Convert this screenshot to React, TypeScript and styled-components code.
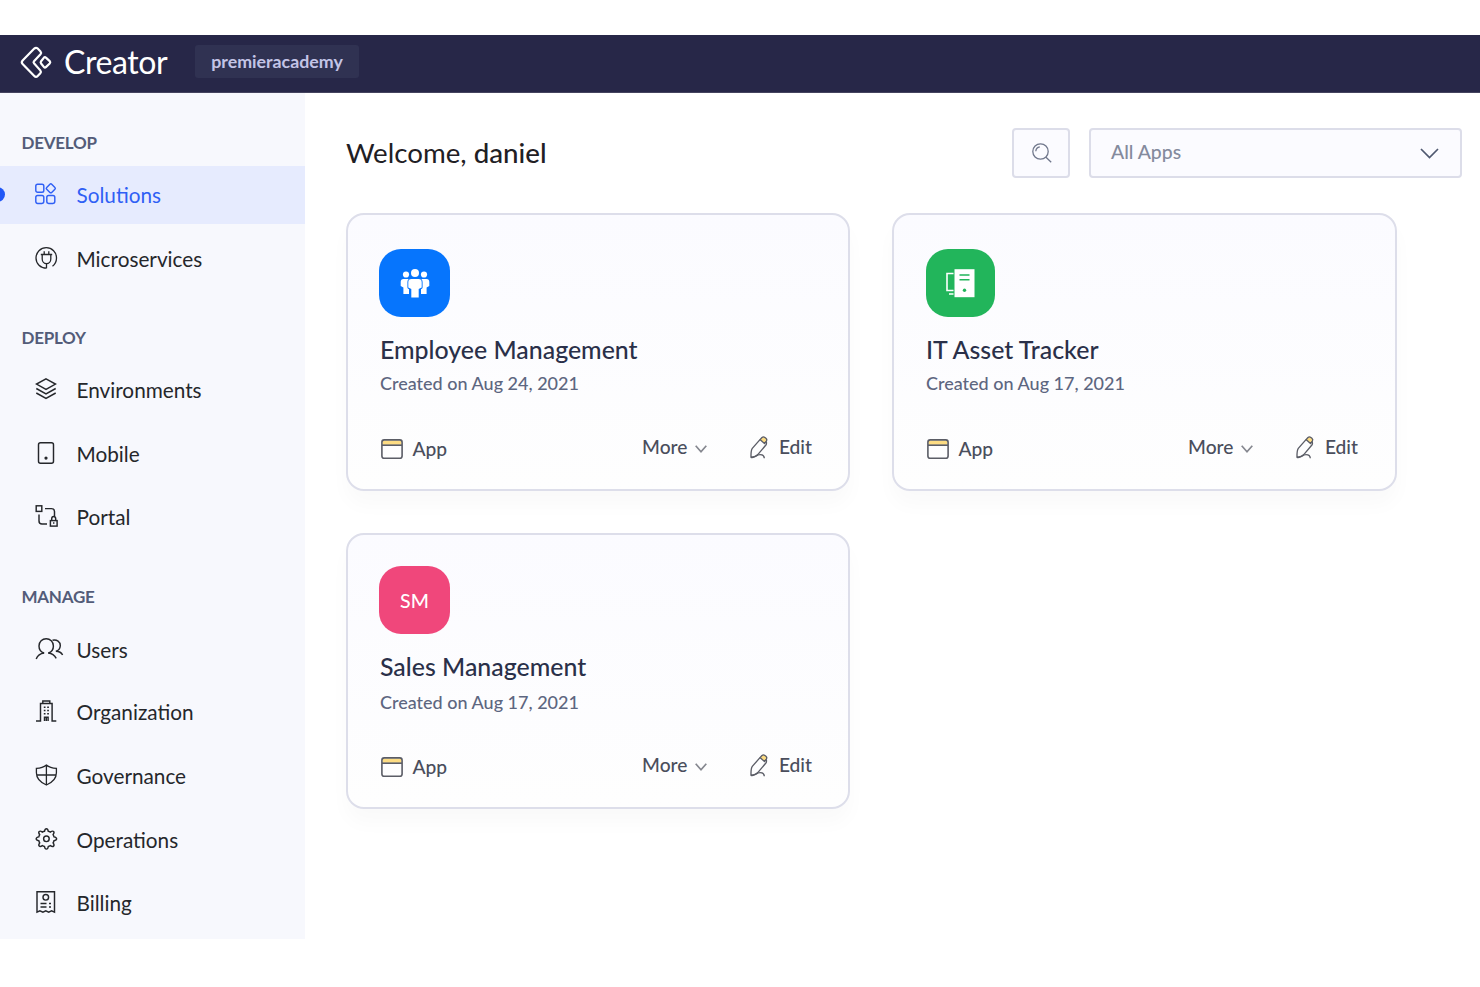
import React from 'react';
import styled, { createGlobalStyle } from 'styled-components';

const GlobalStyle = createGlobalStyle`
  * { box-sizing: border-box; }
  body { margin: 0; background: #fff; font-family: Lato, "Liberation Sans", sans-serif; color: #24262b; }
  svg { display: block; flex: none; overflow: visible; }
`;

const Page = styled.div`
  width: 1480px;
  height: 987px;
  padding-top: 35px;
  overflow: hidden;
`;

const TopBar = styled.header`
  height: 58px;
  background: #272748;
  border-bottom: 1px solid #45445f;
  display: flex;
  align-items: flex-start;
  padding: 10px 0 0 20px;
`;

const Brand = styled.div`
  width: 175px;
  display: flex;
  gap: 12px;
  color: #fff;
  font-size: 32px;
  line-height: 34px;
  letter-spacing: -0.4px;
  white-space: nowrap;
`;

const Workspace = styled.div`
  width: 164px;
  height: 33px;
  border-radius: 3px;
  background: #303252;
  color: #c3c4e6;
  font-size: 17.8px;
  font-weight: 700;
  line-height: 33px;
  text-align: center;
`;

const Body = styled.div`
  display: flex;
  height: 846px;
`;

const Sidebar = styled.nav`
  width: 305px;
  height: 846px;
  background: #f7f8fd;
  padding-top: 38px;
`;

const Heading = styled.h2<{ $top: number; $bottom: number }>`
  margin: ${p => p.$top}px 0 ${p => p.$bottom}px 21.5px;
  height: 24px;
  line-height: 24px;
  font-size: 17px;
  letter-spacing: -0.25px;
  font-weight: 700;
  color: #535c79;
`;

const NavItem = styled.a<{ $active?: boolean; $gap: number }>`
  position: relative;
  display: flex;
  align-items: center;
  height: 58px;
  margin-top: ${p => p.$gap}px;
  padding-left: 34px;
  gap: 12.5px;
  font-size: 20.75px;
  color: ${p => (p.$active ? '#2f5ff5' : '#25272b')};
  background: ${p => (p.$active ? '#e6ebfe' : 'transparent')};
  svg { margin-top: -3px; }
`;

const ActiveDot = styled.i`
  position: absolute;
  left: -10px;
  top: 21px;
  width: 15px;
  height: 15px;
  border-radius: 50%;
  background: #2258f6;
`;

const Main = styled.main`
  flex: 1;
  padding: 35px 18px 0 41px;
`;

const Toolbar = styled.div`
  display: flex;
  height: 50px;
  align-items: center;
`;

const Welcome = styled.h1`
  flex: 1;
  margin: 0;
  padding-bottom: 2px;
  font-size: 27.7px;
  font-weight: 400;
  color: #1f2024;
  b { font-weight: 500; }
`;

const SearchButton = styled.button`
  width: 58px;
  height: 50px;
  padding: 0 0 0 2px;
  display: grid;
  place-items: center;
  background: #fbfbff;
  border: 2px solid #dcdde9;
  border-radius: 4px;
`;

const Select = styled.div`
  width: 373px;
  height: 50px;
  margin-left: 19px;
  padding: 0 21px 4px 20px;
  display: flex;
  align-items: center;
  justify-content: space-between;
  background: #fbfbff;
  border: 2px solid #dcdde9;
  border-radius: 4px;
  color: #848a9d;
  font-size: 19.4px;
  font-weight: 500;
  svg { margin-top: 5px; }
`;

const Grid = styled.section`
  display: grid;
  grid-template-columns: 504px 505px;
  grid-template-rows: 278px 276px;
  column-gap: 42px;
  row-gap: 42px;
  margin-top: 35px;
`;

const Card = styled.article<{ $top: number }>`
  border: 2px solid #dddeea;
  border-radius: 18px;
  background: linear-gradient(#fbfbff, #fefefe);
  box-shadow: 0 14px 20px rgba(0, 0, 0, 0.025);
  padding: ${p => p.$top}px 36px 0 31px;
  display: flex;
  flex-direction: column;
`;

const Tile = styled.div<{ $color: string; $width: number; $left: number }>`
  width: ${p => p.$width}px;
  height: 68px;
  margin-left: ${p => p.$left}px;
  border-radius: 22px;
  background: ${p => p.$color};
  display: grid;
  place-items: center;
  color: #fff;
  font-size: 19.5px;
  font-weight: 500;
`;

const Title = styled.h3`
  margin: 15px 0 0 1px;
  font-size: 24.9px;
  font-weight: 500;
  line-height: 34px;
  color: #2a3049;
  white-space: nowrap;
`;

const Created = styled.p<{ $gap: number }>`
  margin: ${p => p.$gap}px 0 0 1px;
  font-size: 18px;
  font-weight: 500;
  line-height: 24px;
  color: #5d6680;
`;

const Footer = styled.div<{ $gap: number; $right: number }>`
  display: flex;
  align-items: center;
  margin: ${p => p.$gap}px ${p => p.$right}px 0 2px;
  height: 30px;
  font-size: 19.2px;
  font-weight: 500;
  color: #4a4e5c;
`;

const Kind = styled.span`
  display: flex;
  flex: 1;
  align-items: center;
  gap: 9.5px;
  svg { margin-top: 2px; }
`;

const Action = styled.span<{ $gap: number; $left: number; $drop: number }>`
  display: flex;
  align-items: center;
  gap: ${p => p.$gap}px;
  margin-left: ${p => p.$left}px;
  padding-bottom: 4px;
  svg { margin-top: ${p => p.$drop}px; }
`;

const glyphs: Record<string, React.ReactNode> = {
  solutions: (
    <>
      <rect x="1.8" y="3.2" width="8" height="8" rx="1.8" />
      <rect x="1.8" y="14.4" width="8" height="8" rx="1.8" />
      <rect x="12.8" y="14.4" width="8" height="8" rx="1.8" />
      <path d="M15.9 3.2q.9-.9 1.8 0l3.2 3.2q.9.9 0 1.8l-3.2 3.2q-.9.9-1.8 0l-3.2-3.2q-.9-.9 0-1.8z" />
    </>
  ),
  micro: (
    <>
      <path d="M12.500 23.200V18.400M12.500 23.200C6.500 23.200 2 18.700 2 13S6.500 2.700 12.300 2.700 22.500 7.200 22.500 13c0 3.500-1.500 6.300-4 8.200" />
      <path d="M6.800 9.500h11.400M8.200 9.500v4.500a4.300 4.600 0 0 0 8.600 0V9.500M10.200 9.300V6.300M14.800 9.300V6.300" />
    </>
  ),
  env: (
    <>
      <path d="M12 2.800l9.500 5.300-9.500 5.300-9.500-5.300z" />
      <path d="M2.300 12.500l9.700 5.300 9.700-5.300M2.300 17l9.700 5.400 9.700-5.400" />
    </>
  ),
  mobile: (
    <>
      <rect x="4.500" y="2.800" width="15" height="20.500" rx="2" />
      <circle cx="12" cy="18" r=".9" fill="currentColor" />
    </>
  ),
  portal: (
    <>
      <rect x="2.200" y="2.800" width="5.600" height="5.600" />
      <path d="M5 11.500V18q0 3 3 3h5M11 5.600h6.500q3 0 3 3V13" />
      <rect x="16.400" y="17.600" width="6.700" height="5.500" />
      <path d="M17.700 17.500v-1.700a2 2.300 0 0 1 4 0v1.700M19.700 19.300v1.500" />
    </>
  ),
  users: (
    <>
      <path d="M10 17C6.800 15.800 5 13 5 9.900a7.200 7.200 0 0 1 14.400 0c0 3.100-1.800 5.900-5 7.100" />
      <path d="M2.200 23c1.200-3.200 4.300-5.600 8-6M14.200 17c3.600.4 6.500 2.400 8 5.300M18.500 4.200c4.300-1 8 1.600 7.800 5.500-.2 2.600-1.700 4.700-4.400 5.600 3.200.1 5.600 1.500 6.700 3.700" />
    </>
  ),
  org: (
    <>
      <path d="M2 23h4.500V5.500h11.600V23h4.200M8.800 5.200V3h7v2.200" />
      <path d="M9.800 9.200h1.700M13.200 9.200h1.700M9.800 12.500h1.700M13.200 12.500h1.700M9.800 15.800h1.700M13.200 15.800h1.700M10.500 23v-3.800h3.600V23M12.300 19v4" />
    </>
  ),
  gov: <path d="M12.400 3c-3 2.500-6.300 3.200-10 3.300v4.500c0 5.800 4.300 9.800 10 12.200 5.700-2.400 10-6.400 10-12.200V6.300c-3.700-.1-7-.8-10-3.300zM12.400 3v20M2.400 13h20" />,
  ops: (
    <>
      <path d="M10.500 5.300Q11 2.800 12.400 2.800t1.900 2.500q1.200.3 2 .8 2.300-1.600 3.300-.6t-.5 3.200q.6 1 .9 2.200 2.600.4 2.600 1.900t-2.600 1.900q-.3 1.200-.9 2.200 1.600 2.200.5 3.200t-3.300-.5q-1 .6-2 .9-.4 2.600-1.900 2.600t-1.900-2.600q-1.200-.3-2.100-.9-2.200 1.600-3.200.5t.5-3.200q-.6-1-.9-2.200-2.600-.4-2.600-1.900t2.600-1.900q.3-1.200.9-2.200-1.600-2.200-.5-3.200t3.200.6q1-.6 2.100-.8z" />
      <circle cx="12.400" cy="12.800" r="2.800" />
    </>
  ),
  billing: (
    <>
      <path d="M3 2.800h17.500v20.300l-2.900-1.300-2.900 1.300-2.900-1.300-2.900 1.300L5.900 21.800 3 23.100z" />
      <circle cx="11.800" cy="8.300" r="2.800" />
      <path d="M6.500 14.500h6M6.500 18h6M15 14.500h2M15 18h2" />
    </>
  ),
};

const NavIcon = ({ name }: { name: string }) => (
  <svg width="30" height="26" viewBox="0 0 30 26" fill="none" stroke="currentColor" strokeWidth={name === 'gov' || name === 'micro' ? 1.3 : 1.45}>
    {glyphs[name]}
  </svg>
);

const sections = [
  { title: 'DEVELOP', top: 0, bottom: 11, items: [['Solutions', 'solutions', 0], ['Microservices', 'micro', 6]] },
  { title: 'DEPLOY', top: 38, bottom: 11, items: [['Environments', 'env', 0], ['Mobile', 'mobile', 6], ['Portal', 'portal', 5]] },
  { title: 'MANAGE', top: 39, bottom: 12, items: [['Users', 'users', 0], ['Organization', 'org', 4], ['Governance', 'gov', 6], ['Operations', 'ops', 6], ['Billing', 'billing', 5]] },
] as { title: string; top: number; bottom: number; items: [string, string, number][] }[];

const People = () => (
  <svg width="30" height="30" viewBox="0 0 30 30" fill="#fff">
    <circle cx="6" cy="6.500" r="3.100" />
    <circle cx="24" cy="6.500" r="3.100" />
    <circle cx="15" cy="5" r="4" />
    <path d="M3.500 11h5.200q-1.300 1-1.300 3v5.500q0 1.300 1.600 1.800V26H3.400v-6.500L.7 18v-4q0-3 2.800-3zM26.500 11h-5.200q1.300 1 1.300 3v5.500q0 1.300-1.600 1.800V26h5.600v-6.500l2.700-1.500v-4q0-3-2.800-3z" />
    <path d="M11.500 11h7q3.200 0 3.200 3.200v5.300l-3 1.500v8.500h-7.400V21l-3-1.500v-5.300q0-3.200 3.200-3.200z" />
  </svg>
);

const Server = () => (
  <svg width="30" height="30" viewBox="0 0 30 30">
    <path d="M7.500 5.500H1v17h6.500M3 26h4.500" fill="none" stroke="#fff" strokeWidth="1.600" />
    <rect x="8.500" y="1.200" width="20" height="28" fill="#fff" />
    <path d="M13.500 7h10M13.500 11.700h10" stroke="#22b55b" strokeWidth="1.400" />
    <circle cx="18.500" cy="22.300" r="1.700" fill="#22b55b" />
  </svg>
);

const AppIcon = () => (
  <svg width="22" height="20" viewBox="0 0 22 20" fill="none" stroke="#5b5d66" strokeWidth="1.600">
    <path d="M1.500 1.500h19v4.300h-19z" fill="#fddc83" stroke="none" />
    <rect x=".9" y=".9" width="20.200" height="18.400" rx="2.300" />
    <path d="M1 6.200h20" />
  </svg>
);

const EditIcon = () => (
  <svg width="18" height="23" viewBox="0 0 18 23" fill="none" stroke="#5b5d66" strokeWidth="1.350" strokeLinejoin="round">
    <path d="M10 3.600l2-2.100q1.400-1.200 2.900 0l1 .8q1.500 1.300.4 2.900l-1.800 2.300z" fill="#fddc83" />
    <path d="M10 3.600L2.300 12.400Q.8 14.500 1 21.300q5-.7 7.200-3.200L15.900 9q.9-1.200.4-3.700" />
    <path d="M1 21.300c3.300 1.300 5.600-2.700 9-2.700 2.500 0 4.200 1 4.300 3.700" />
  </svg>
);

const Chevron = ({ w, h, c }: { w: number; h: number; c: string }) => (
  <svg width={w} height={h} viewBox={`0 0 ${w} ${h}`} fill="none" stroke={c} strokeWidth="1.700">
    <path d={`M.7 .8L${w / 2} ${h - 1.2}L${w - 0.7} .8`} />
  </svg>
);

const cards = [
  { title: 'Employee Management', date: 'Aug 24, 2021', color: '#0675fd', width: 71, left: 0, top: 34, gap: 5, foot: 38, right: 0, icon: <People /> },
  { title: 'IT Asset Tracker', date: 'Aug 17, 2021', color: '#22b55b', width: 69, left: 1, top: 34, gap: 5, foot: 38, right: 1, icon: <Server /> },
  { title: 'Sales Management', date: 'Aug 17, 2021', color: '#f0477b', width: 71, left: 0, top: 31, gap: 7, foot: 37, right: 0, icon: 'SM' },
];

export default function App() {
  return (
    <Page>
      <GlobalStyle />
      <TopBar>
        <Brand>
          <svg width="32" height="36" viewBox="0 0 32 36" fill="none" stroke="#fff" strokeWidth="2.200" strokeLinejoin="round">
            <path d="M14.300 3.600L2.600 15.600q-1.600 1.700 0 3.400l11.700 12q1.700 1.700 3.400 0l2.600-2.800q1.200-1.400 0-2.800L14 18.300q-.9-1 0-2l6.500-7q1.200-1.400 0-2.800l-2.800-2.900q-1.700-1.700-3.400 0z" />
            <path d="M24 12.600l-2.900 3.700q-.9 1.100 0 2.200l2.900 3.600q.9 1 1.900 0l3.800-3.600q1.100-1.200 0-2.400l-3.800-3.500q-1-1-1.900 0z" />
          </svg>
          Creator
        </Brand>
        <Workspace>premieracademy</Workspace>
      </TopBar>
      <Body>
        <Sidebar>
          {sections.map(s => (
            <React.Fragment key={s.title}>
              <Heading $top={s.top} $bottom={s.bottom}>{s.title}</Heading>
              {s.items.map(([label, icon, gap]) => (
                <NavItem key={label} $gap={gap} $active={label === 'Solutions'}>
                  {label === 'Solutions' && <ActiveDot />}
                  <NavIcon name={icon} />
                  {label}
                </NavItem>
              ))}
            </React.Fragment>
          ))}
        </Sidebar>
        <Main>
          <Toolbar>
            <Welcome>Welcome, <b>daniel</b></Welcome>
            <SearchButton aria-label="Search">
              <svg width="20" height="20" viewBox="0 0 20 20" fill="none" stroke="#70778c" strokeWidth="1.300">
                <circle cx="8.500" cy="8.500" r="7.700" />
                <path d="M14 14.200l5.200 5M3.800 8.200q.3-3.800 4-4.300" />
              </svg>
            </SearchButton>
            <Select>
              All Apps
              <svg width="19" height="11" viewBox="0 0 19 11" fill="none" stroke="#4f5870" strokeWidth="1.700"><path d="M1 1l8.500 8.500L18 1" /></svg>
            </Select>
          </Toolbar>
          <Grid>
            {cards.map(c => (
              <Card key={c.title} $top={c.top}>
                <Tile $color={c.color} $width={c.width} $left={c.left}>{c.icon}</Tile>
                <Title>{c.title}</Title>
                <Created $gap={c.gap}>Created on {c.date}</Created>
                <Footer $gap={c.foot} $right={c.right}>
                  <Kind><AppIcon />App</Kind>
                  <Action $gap={8} $left={0} $drop={6}>More<Chevron w={12} h={8} c="#85878f" /></Action>
                  <Action $gap={10.5} $left={43} $drop={2}><EditIcon />Edit</Action>
                </Footer>
              </Card>
            ))}
          </Grid>
        </Main>
      </Body>
    </Page>
  );
}
